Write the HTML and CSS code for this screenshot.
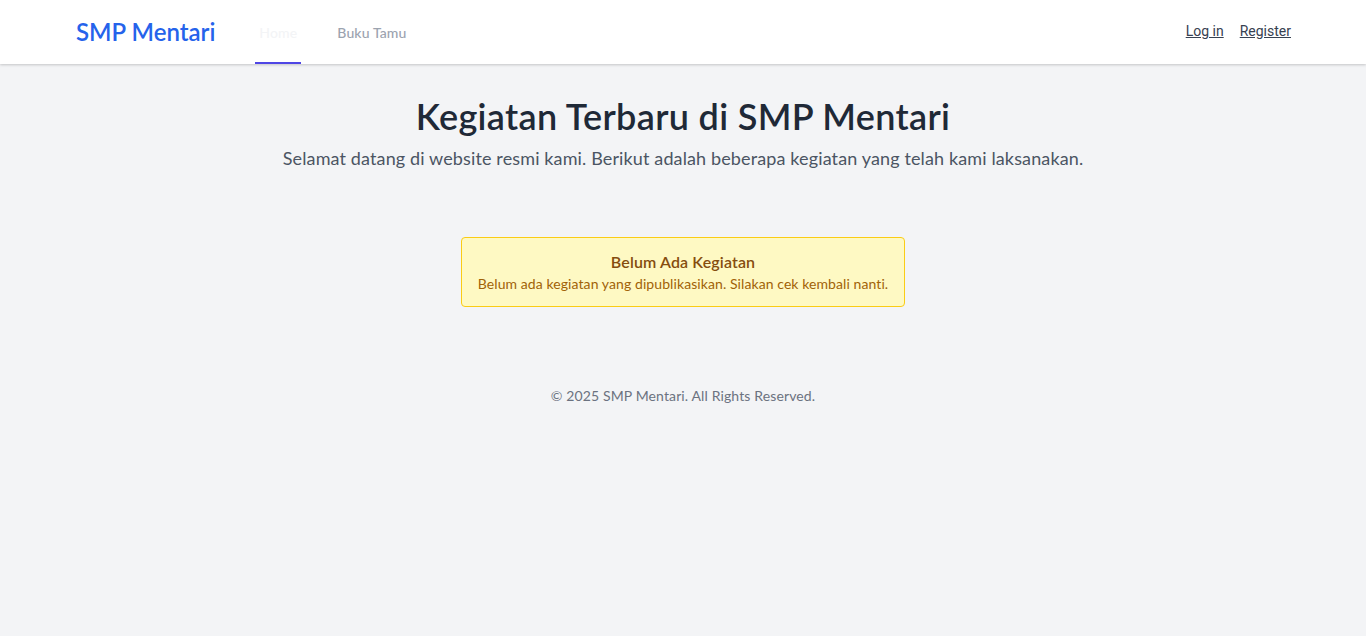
FILE: index.html
```html
<!DOCTYPE html>
<html lang="id">
<head>
<meta charset="utf-8">
<title>SMP Mentari</title>
<link rel="stylesheet" href="styles.css">
</head>
<body>
<nav class="navbar">
  <div class="nav-inner">
    <div class="nav-left">
      <a class="brand" href="#">SMP Mentari</a>
      <div class="nav-links">
        <a class="nav-link active" href="#">Home</a>
        <a class="nav-link" href="#">Buku Tamu</a>
      </div>
    </div>
    <div class="nav-auth">
      <a href="#">Log in</a>
      <a href="#">Register</a>
    </div>
  </div>
</nav>
<main class="main">
  <h1 class="title">Kegiatan Terbaru di SMP Mentari</h1>
  <p class="subtitle">Selamat datang di website resmi kami. Berikut adalah beberapa kegiatan yang telah kami laksanakan.</p>
  <div class="alert">
    <p class="alert-title">Belum Ada Kegiatan</p>
    <p class="alert-text">Belum ada kegiatan yang dipublikasikan. Silakan cek kembali nanti.</p>
  </div>
</main>
<footer class="footer">© 2025 SMP Mentari. All Rights Reserved.</footer>
</body>
</html>
```
FILE: styles.css
```css
* { box-sizing: border-box; }
html, body { margin: 0; padding: 0; }
body {
  background: #f3f4f6;
  font-family: "Lato", "Noto Sans", sans-serif;
  letter-spacing: 0.008em;
  color: #1f2937;
  min-height: 636px;
}
p { margin: 0; }
a { text-decoration: none; }

.navbar {
  background: #fff;
  height: 64px;
  box-shadow: 0 1px 3px rgba(0,0,0,0.12), 0 1px 2px rgba(0,0,0,0.08);
}
.nav-inner {
  max-width: 1280px;
  margin: 0 auto;
  padding: 0 32px 0 33px;
  height: 64px;
  display: flex;
  justify-content: space-between;
  align-items: stretch;
}
.nav-left { display: flex; align-items: stretch; }
.brand {
  display: flex;
  align-items: center;
  font-size: 24px;
  font-weight: 600;
  letter-spacing: 0;
  color: #2563eb;
  padding-bottom: 1px;
}
.nav-links { display: flex; margin-left: 40px; gap: 32px; }
.nav-link {
  display: flex;
  align-items: center;
  padding: 2px 4px 0;
  border-bottom: 2px solid transparent;
  font-size: 14px;
  font-weight: 500;
  color: #9ca3af;
}
.nav-link.active {
  color: #f3f4f6;
  border-bottom-color: #4f46e5;
}
.nav-auth {
  display: flex;
  align-items: center;
  gap: 16px;
  padding-bottom: 2px;
}
.nav-auth a {
  font-family: "Roboto", "Liberation Sans", sans-serif;
  letter-spacing: 0;
  font-size: 14px;
  color: #374151;
  text-decoration: underline;
}

.main {
  padding-top: 32px;
  display: flex;
  flex-direction: column;
  align-items: center;
  text-align: center;
}
.title {
  margin: 0;
  font-size: 36px;
  line-height: 40px;
  font-weight: 600;
  letter-spacing: 0.009em;
  color: #1f2937;
}
.subtitle {
  margin-top: 8px;
  font-size: 18px;
  line-height: 28px;
  color: #4b5563;
}
.alert {
  margin-top: 65px;
  display: inline-block;
  padding: 12px 16px;
  background: #fef9c3;
  border: 1px solid #facc15;
  border-radius: 4px;
  color: #a16207;
}
.alert-title {
  font-size: 16px;
  line-height: 24px;
  font-weight: 600;
  color: #854d0e;
}
.alert-text {
  font-size: 14px;
  line-height: 20px;
  letter-spacing: 0.006em;
}
.footer {
  margin-top: 79px;
  text-align: center;
  font-size: 14px;
  line-height: 20px;
  color: #6b7280;
}
```
